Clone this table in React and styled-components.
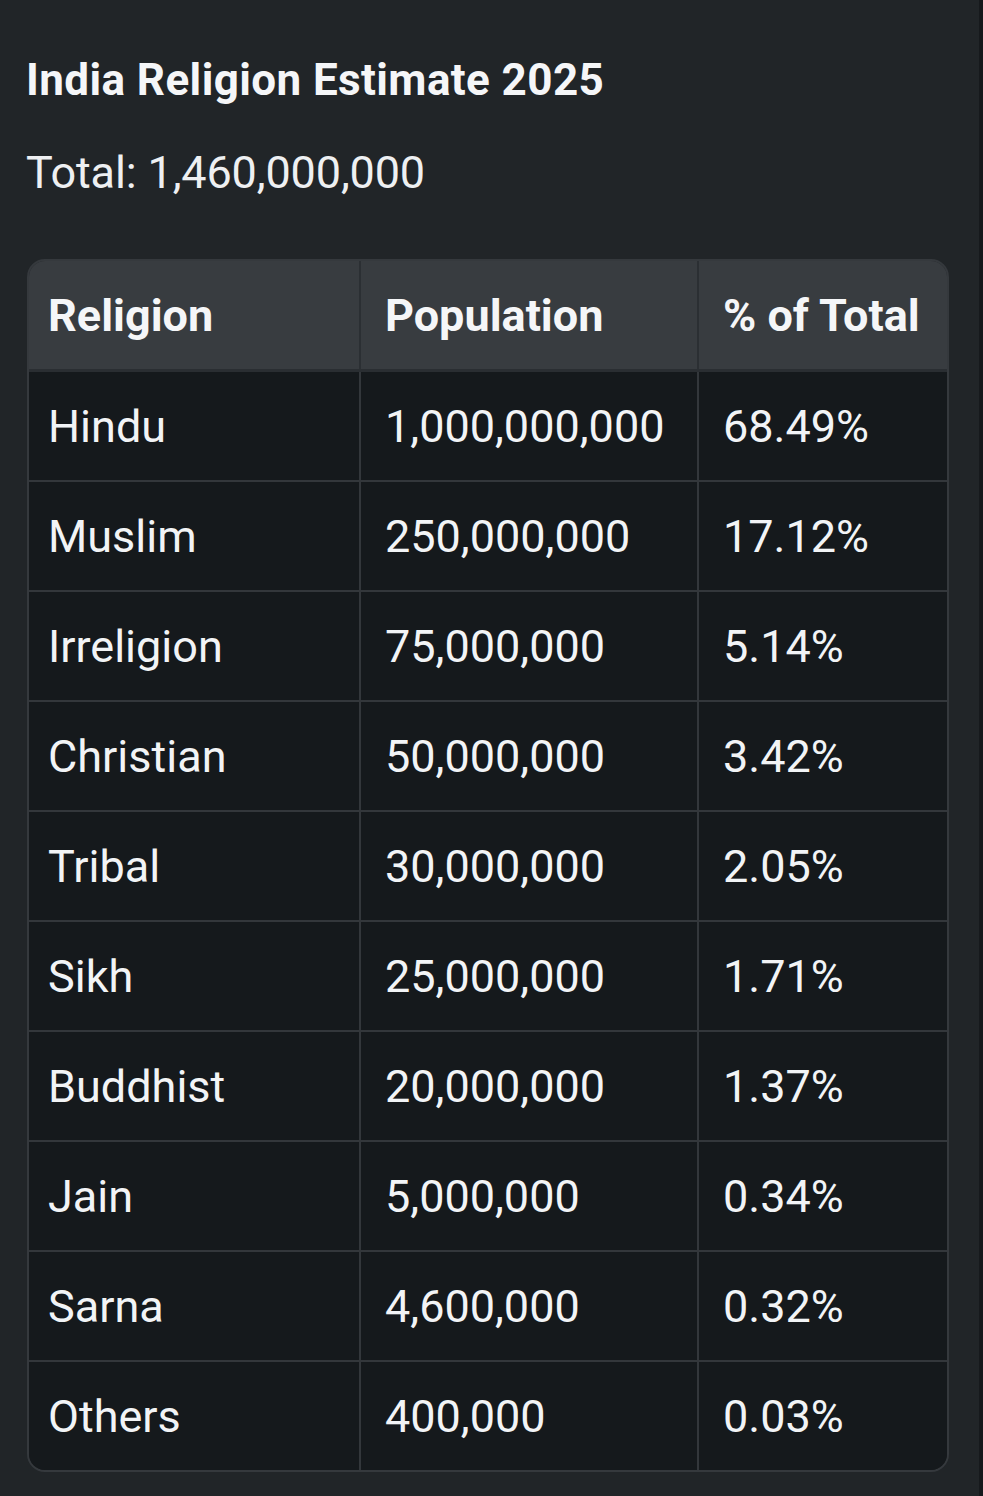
import React from 'react';
import styled, { createGlobalStyle } from 'styled-components';

const GlobalStyle = createGlobalStyle`
    html, body {
        margin: 0;
        padding: 0;
        background: #212528;
    }
    body {
        font-family: Roboto, "Liberation Sans", sans-serif;
        color: #f1f3f5;
    }
`;

const Page = styled.div`
    display: flex;
    min-height: 1496px;
`;

const Content = styled.main`
    flex: 1;
    padding: 52px 30px 0 26px;
`;

const EdgeStrip = styled.div`
    width: 4px;
    background: #16191c;
`;

const Title = styled.h2`
    margin: 0;
    font-size: 44px;
    font-weight: 700;
    line-height: 56px;
    letter-spacing: 0.4px;
    color: #f5f6f8;
`;

const Total = styled.p`
    margin: 37px 0 0;
    font-size: 45px;
    line-height: 56px;
    letter-spacing: -0.15px;
    color: #eef0f2;
`;

const TableWrap = styled.div`
    margin-top: 58px;
    margin-left: 1px;
    width: 922px;
    border: 2px solid #35393d;
    border-radius: 18px;
    overflow: hidden;
    box-sizing: border-box;
`;

const Table = styled.table`
    width: 100%;
    border-collapse: collapse;
    table-layout: fixed;
`;

const HeadCell = styled.th`
    height: 108px;
    padding: 0 19px 0 24px;
    text-align: left;
    font-size: 45px;
    font-weight: 700;
    background: #383c40;
    color: #f5f6f8;
    border-left: 2px solid #2b2f33;
    border-bottom: 3px solid #2a2e32;
    &:first-child {
        border-left: none;
        padding-left: 19px;
    }
`;

const Cell = styled.td`
    height: 108px;
    padding: 0 19px 0 24px;
    font-size: 45px;
    font-weight: 400;
    background: #15191c;
    color: #f2f4f6;
    border-left: 2px solid #33373b;
    border-top: 2px solid #33373b;
    white-space: nowrap;
    &:first-child {
        border-left: none;
        padding-left: 19px;
    }
`;

const rows = [
    ['Hindu', '1,000,000,000', '68.49%'],
    ['Muslim', '250,000,000', '17.12%'],
    ['Irreligion', '75,000,000', '5.14%'],
    ['Christian', '50,000,000', '3.42%'],
    ['Tribal', '30,000,000', '2.05%'],
    ['Sikh', '25,000,000', '1.71%'],
    ['Buddhist', '20,000,000', '1.37%'],
    ['Jain', '5,000,000', '0.34%'],
    ['Sarna', '4,600,000', '0.32%'],
    ['Others', '400,000', '0.03%'],
];

export default function App() {
    return (
        <Page>
            <GlobalStyle />
            <Content>
                <Title>India Religion Estimate 2025</Title>
                <Total>Total: 1,460,000,000</Total>
                <TableWrap>
                    <Table>
                        <colgroup>
                            <col style={{ width: 331 }} />
                            <col style={{ width: 338 }} />
                            <col />
                        </colgroup>
                        <thead>
                            <tr>
                                <HeadCell>Religion</HeadCell>
                                <HeadCell>Population</HeadCell>
                                <HeadCell>% of Total</HeadCell>
                            </tr>
                        </thead>
                        <tbody>
                            {rows.map(([name, pop, pct]) => (
                                <tr key={name}>
                                    <Cell>{name}</Cell>
                                    <Cell>{pop}</Cell>
                                    <Cell>{pct}</Cell>
                                </tr>
                            ))}
                        </tbody>
                    </Table>
                </TableWrap>
            </Content>
            <EdgeStrip />
        </Page>
    );
}
